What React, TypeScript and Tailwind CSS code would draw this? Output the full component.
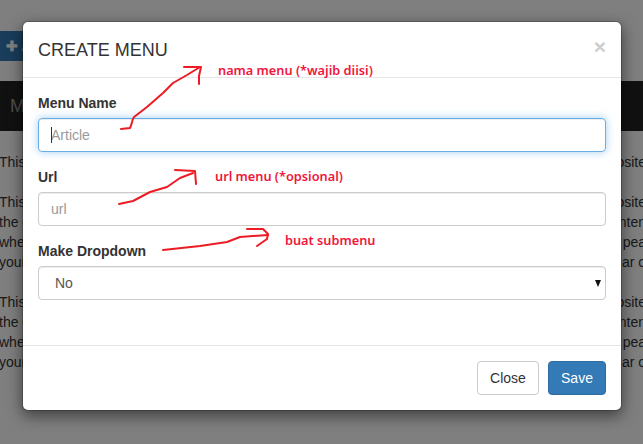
const lines = [
  ["This", "osite"],
  null,
  ["This", "osite"],
  ["the c", "nten"],
  ["wher", "pea"],
  ["your", "ar o"],
  null,
  ["This", "osite"],
  ["the c", "nten"],
  ["wher", "pea"],
  ["your", "ar o"],
];

function Background() {
  return (
    <div className="h-[444px] w-[643px] overflow-hidden bg-white text-sm leading-5 text-[#333]">
      <div className="pt-[31px]">
        <div className="flex h-[30px] w-[70px] items-center rounded-r bg-[#337ab7] pl-[6px] text-white">
          <span className="font-bold">✚ Add</span>
        </div>
      </div>
      <div className="mt-5 flex h-[50px] items-center bg-[#222] pl-[10px] text-[18px] text-[#9d9d9d]">Menu</div>
      <div className="flex flex-col pt-[21px]">
        {lines.map((line, i) =>
          line ? (
            <div key={i} className="flex h-5 justify-between">
              <span className="-ml-px">{line[0]}</span>
              <span className="-mr-[3px]">{line[1]}</span>
            </div>
          ) : (
            <div key={i} className="h-5" />
          ),
        )}
      </div>
    </div>
  );
}

function Annotations() {
  return (
    <>
      <svg className="absolute left-0 top-0" width="643" height="444" fill="none" stroke="#ed1c24" strokeWidth="2" strokeLinecap="round" strokeLinejoin="round">
        <path d="M121 129 L130 128 C132 124 132 120 134 117 L147 107 L163 93 L173 83 L187 75 L200 67" />
        <path d="M184 67 L201 67 L199 76 L199 84" />
        <path d="M119 204 L133 201 L150 192 L167 187 L180 178 L193 173" />
        <path d="M175 170 L195 171 L196 184" />
        <path d="M163 250 L200 246 L227 242 L240 237 L268 235" />
        <path d="M247 229 L263 229 L268 234 L267 239 L257 246" />
      </svg>
      <span className="absolute left-[218px] top-[61px] text-[12.75px] leading-[18px] font-semibold whitespace-nowrap text-[#f0163c] font-['Noto_Sans',sans-serif]">nama menu (*wajib diisi)</span>
      <span className="absolute left-[215px] top-[167px] text-[12.75px] leading-[18px] font-semibold whitespace-nowrap text-[#f0163c] font-['Noto_Sans',sans-serif]">url menu (*opsional)</span>
      <span className="absolute left-[285px] top-[231px] text-[12.75px] leading-[18px] font-semibold whitespace-nowrap text-[#f0163c] font-['Noto_Sans',sans-serif]">buat submenu</span>
    </>
  );
}

export default function App() {
  return (
    <div className="relative h-[444px] w-[643px] overflow-hidden font-['Liberation_Sans',Arial,sans-serif]">
      <Background />
      <div className="absolute inset-0 bg-black/50" />

      <div className="absolute left-[22px] top-[21px] w-[600px] rounded-md border border-black/20 bg-white bg-clip-padding text-sm leading-5 text-[#333] shadow-[0_5px_15px_rgba(0,0,0,0.5)]">
        <div className="relative h-[56px] border-b border-[#e5e5e5] px-[15px] pt-[15px]">
          <h4 className="text-[18px] leading-[26px] uppercase">Create Menu</h4>
          <span className="absolute right-[15px] top-[14px] text-[21px] leading-[21px] font-bold text-[#cdcdcd]">×</span>
        </div>

        <div className="flex flex-col gap-[15px] px-[15px] pt-[15px] pb-[45px]">
          <div>
            <label className="mb-[5px] block font-bold">Menu Name</label>
            <div className="relative">
              <input
                className="block h-[34px] w-full rounded border border-[#66afe9] px-3 text-[#555] shadow-[inset_0_1px_1px_rgba(0,0,0,0.075),0_0_8px_rgba(102,175,233,0.6)] outline-none placeholder:text-[#999]"
                placeholder="Article"
              />
              <span className="absolute left-[13px] top-[9px] h-4 w-px bg-[#333]" />
            </div>
          </div>
          <div>
            <label className="mb-[5px] block font-bold">Url</label>
            <input
              className="block h-[34px] w-full rounded border border-[#ccc] px-3 text-[#555] shadow-[inset_0_1px_1px_rgba(0,0,0,0.075)] outline-none placeholder:text-[#999]"
              placeholder="url"
            />
          </div>
          <div>
            <label className="mb-[5px] block font-bold">Make Dropdown</label>
            <div className="relative">
              <select className="block h-[34px] w-full appearance-none rounded border border-[#ccc] bg-white pl-4 text-[#555] shadow-[inset_0_1px_1px_rgba(0,0,0,0.075)] outline-none">
                <option>No</option>
              </select>
              <svg className="absolute right-[5px] top-[14px]" width="6" height="7" viewBox="0 0 6 7" fill="#111">
                <path d="M0 0 H6 L3 7 Z" />
              </svg>
            </div>
          </div>
        </div>

        <div className="flex justify-end gap-[9px] border-t border-[#e5e5e5] p-[15px]">
          <button className="h-[34px] w-[62px] rounded border border-[#ccc] bg-white text-[#333]">Close</button>
          <button className="h-[34px] w-[58px] rounded border border-[#2e6da4] bg-[#337ab7] text-white">Save</button>
        </div>
      </div>

      <Annotations />
    </div>
  );
}
